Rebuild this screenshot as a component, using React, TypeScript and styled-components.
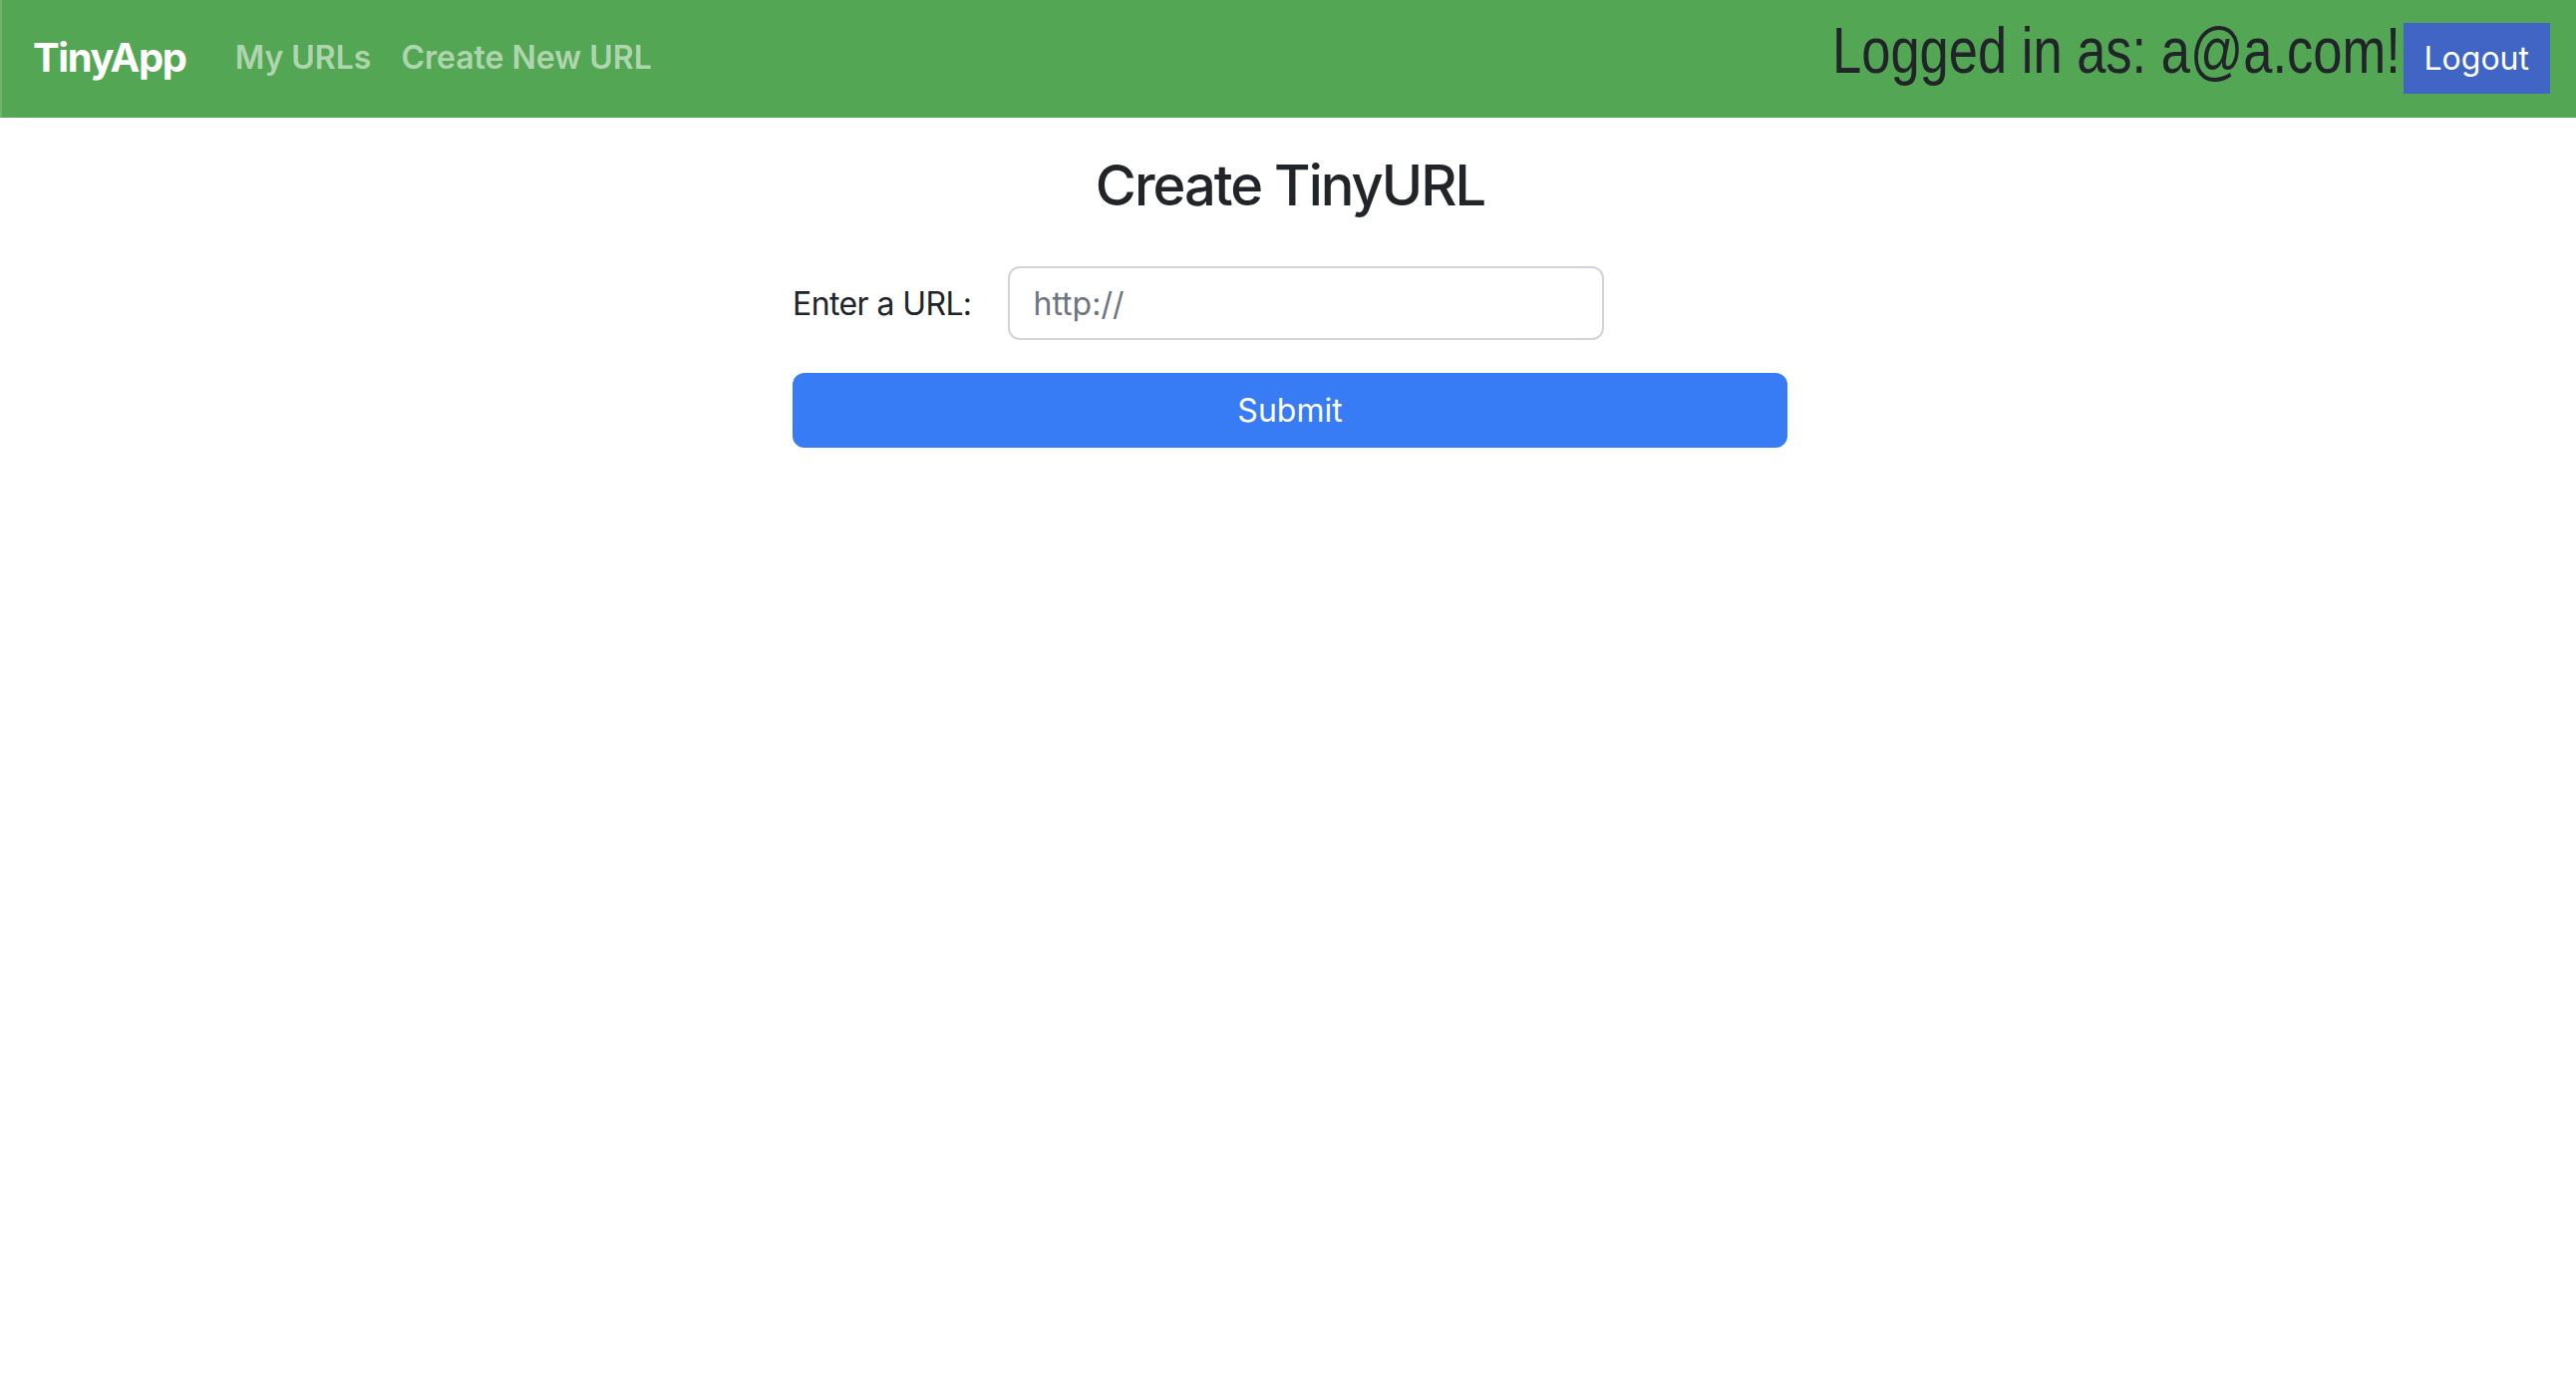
import React from "react";
import styled, { createGlobalStyle } from "styled-components";

const GlobalStyle = createGlobalStyle`
  body {
    margin: 0;
    background: #ffffff;
    color: #212529;
    font-family: Inter, "Noto Sans", "Liberation Sans", sans-serif;
  }
`;

// top bar
const Navbar = styled.nav`
  height: 118px;
  background-color: #53a653;
  border-left: 2px solid #6db56d;
  box-sizing: border-box;
  display: flex;
  align-items: center;
  padding: 0 26px 0 31px;
`;

const Brand = styled.a`
  color: #ffffff;
  font-size: 40px;
  font-weight: 700;
  letter-spacing: -1.4px;
  text-decoration: none;
  margin-right: 49px;
  margin-bottom: 4px;
`;

const NavLinks = styled.div`
  display: flex;
  gap: 30px;
  margin-bottom: 4px;
`;

const NavLink = styled.a`
  color: rgba(255, 255, 255, 0.55);
  font-size: 32px;
  font-weight: 600;
  text-decoration: none;
`;

const UserArea = styled.div`
  margin-left: auto;
  display: flex;
  align-items: center;
  gap: 3px;
`;

const LoggedIn = styled.h2`
  margin: 0 0 15px 0;
  font-family: "Liberation Sans", Arial, sans-serif;
  font-size: 64px;
  font-weight: 400;
  line-height: 1.2;
  color: #212529;
`;

// the original face is a narrow Arial; squeeze Liberation Sans to that width
const Narrow = styled.span`
  display: inline-block;
  transform: scaleX(0.82);
  transform-origin: right center;
  margin-left: -125px;
`;

const LogoutButton = styled.button`
  height: 71px;
  padding: 0 21px;
  border: none;
  background-color: #4065c4;
  color: #ffffff;
  font-family: Inter, "Noto Sans", sans-serif;
  font-size: 32px;
  cursor: pointer;
`;

// page body
const Main = styled.main`
  width: 998px;
  margin: 0 auto;
  padding-left: 4px;
  display: flex;
  flex-direction: column;
`;

const Title = styled.h3`
  margin: 35px 0 0 0;
  text-align: center;
  font-size: 56px;
  font-weight: 500;
  letter-spacing: -2px;
  line-height: 1.2;
  color: #212529;
`;

const FormRow = styled.div`
  display: flex;
  align-items: center;
  margin-top: 47px;
`;

const Label = styled.label`
  font-size: 32px;
  letter-spacing: -0.6px;
  color: #212529;
  margin-right: 36px;
`;

const UrlInput = styled.input`
  width: 598px;
  height: 74px;
  box-sizing: border-box;
  border: 2px solid #ced4da;
  border-radius: 12px;
  padding: 0 24px;
  font-family: Inter, "Noto Sans", sans-serif;
  font-size: 32px;
  color: #212529;

  &::placeholder {
    color: #6c757d;
  }
`;

const SubmitButton = styled.button`
  margin-top: 33px;
  height: 75px;
  width: 100%;
  border: none;
  border-radius: 12px;
  background-color: #377bf5;
  color: #ffffff;
  font-family: Inter, "Noto Sans", sans-serif;
  font-size: 32px;
  cursor: pointer;
`;

const App = () => {
  return (
    <>
      <GlobalStyle />
      <Navbar>
        <Brand href="#">TinyApp</Brand>
        <NavLinks>
          <NavLink href="#">My URLs</NavLink>
          <NavLink href="#">Create New URL</NavLink>
        </NavLinks>
        <UserArea>
          <LoggedIn>
            <Narrow>Logged in as: a@a.com!</Narrow>
          </LoggedIn>
          <LogoutButton>Logout</LogoutButton>
        </UserArea>
      </Navbar>
      <Main>
        <Title>Create TinyURL</Title>
        <FormRow>
          <Label htmlFor="longURL">Enter a URL:</Label>
          <UrlInput id="longURL" type="text" placeholder="http://" />
        </FormRow>
        <SubmitButton type="submit">Submit</SubmitButton>
      </Main>
    </>
  );
};

export default App;
